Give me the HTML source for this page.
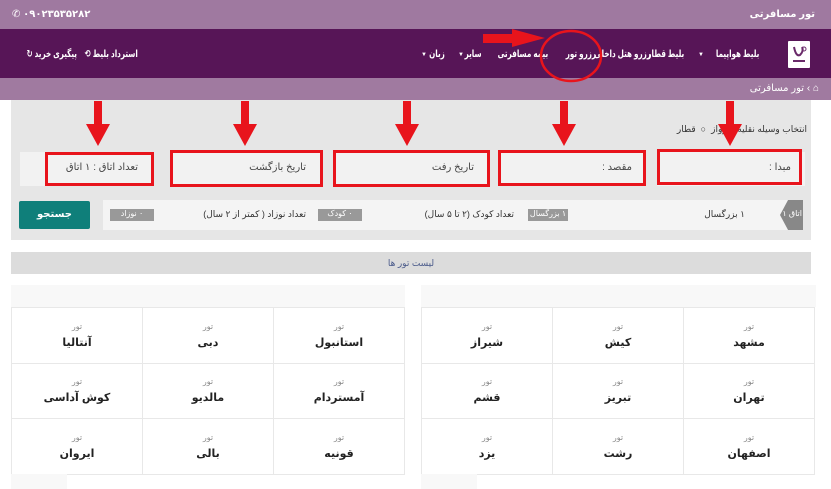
<!DOCTYPE html>
<html><head><meta charset="utf-8"><style>
*{margin:0;padding:0;box-sizing:border-box}
body{width:831px;height:489px;overflow:hidden;background:#fff;font-family:"Liberation Sans","DejaVu Sans",sans-serif;position:relative;font-size:10px;color:#333}
.a{position:absolute;white-space:nowrap}
.r{direction:rtl}
.top{left:0;top:0;width:831px;height:29px;background:#9f79a0;color:#fff;font-weight:bold}
.nav{left:0;top:29px;width:831px;height:49px;background:#571557;color:#fff;font-size:10px;overflow:hidden}
.nav span{top:20px}
.s{transform:scaleX(.72);transform-origin:right center;font-weight:bold}
.bc{left:0;top:78px;width:831px;height:22px;background:#a07aa0;color:#fff}
.srch{left:11px;top:100px;width:800px;height:140px;background:#e6e6e6}
.fld{background:#f2f2f2;height:34px;top:152px;font-size:10px;color:#444;direction:rtl;padding:10px 14px}
.rb{border:3px solid #e8141c}
.grid{border-collapse:collapse;position:absolute;top:307px}
.grid td{width:131px;height:55.5px;border:1px solid #e8e8e8;text-align:center;vertical-align:middle;direction:rtl}
.grid small{display:block;font-size:8px;color:#888;margin-bottom:5px}
.grid b{font-size:11px;color:#222}
</style></head><body>
<div class="a top"><span class="a r" style="right:16px;top:9px;font-size:10px">تور مسافرتی</span><span class="a" style="left:12px;top:9px;font-size:10px;direction:ltr">&#9990; ۰۹۰۲۳۵۳۵۲۸۲</span></div>
<div class="a nav">
 <div class="a" style="left:788px;top:12px;width:22px;height:27px;background:#fff;border-radius:1px"></div>
 <svg class="a" style="left:790px;top:14px" width="18" height="22"><path d="M4 4 Q6 14 10 12 Q14 8 12 4" fill="none" stroke="#6a2a6a" stroke-width="2"/><circle cx="14" cy="6" r="2" fill="none" stroke="#6a2a6a"/><rect x="3" y="17" width="12" height="2" fill="#6a2a6a"/></svg>
 <span class="a r s" style="right:72px">بلیط هواپیما</span>
 <span class="a" style="left:698px;font-size:6px;top:23px">▼</span>
 <span class="a r s" style="right:147px">بلیط قطار</span>
 <span class="a r s" style="right:180px">رزرو هتل داخلی</span>
 <span class="a r s" style="right:235px">رزرو تور</span>
 <span class="a r s" style="right:283px">بیمه مسافرتی</span>
 <span class="a r s" style="right:349px">سایر</span>
 <span class="a" style="left:458px;font-size:6px;top:23px">▼</span>
 <span class="a r s" style="right:386px">زبان</span>
 <span class="a" style="left:421px;font-size:6px;top:23px">▼</span>
 <span class="a r s" style="right:693px">استرداد بلیط ⟲</span>
 <span class="a r s" style="right:754px">پیگیری خرید ↻</span>
</div>
<div class="a bc"><span class="a r" style="right:12px;top:5px;font-size:10px">⌂ &#8250; تور مسافرتی</span></div>
<div class="a srch"></div>
<span class="a r" style="right:24px;top:124px;font-size:9px">انتخاب وسیله نقلیه &nbsp; پرواز &nbsp;○&nbsp; قطار</span>
<div class="a fld" style="left:20px;width:132px">تعداد اتاق : ۱ اتاق</div>
<div class="a fld" style="left:170px;width:150px">تاریخ بازگشت</div>
<div class="a fld" style="left:333px;width:155px">تاریخ رفت</div>
<div class="a fld" style="left:498px;width:148px">مقصد :</div>
<div class="a fld" style="left:657px;width:148px">مبدا :</div>
<div class="a rb" style="left:45px;top:152px;width:109px;height:34px"></div>
<div class="a rb" style="left:170px;top:150px;width:153px;height:37px"></div>
<div class="a rb" style="left:333px;top:150px;width:157px;height:37px"></div>
<div class="a rb" style="left:498px;top:150px;width:148px;height:36px"></div>
<div class="a rb" style="left:657px;top:149px;width:145px;height:36px"></div>
<div class="a" style="left:103px;top:200px;width:700px;height:30px;background:#f4f4f4"></div>
<div class="a" style="left:780px;top:200px;width:23px;height:30px;background:#888;clip-path:polygon(35% 0,100% 0,100% 100%,35% 100%,0 50%)"></div>
<span class="a r" style="right:29px;top:209px;color:#fff;font-size:8px">اتاق ۱</span>
<span class="a r" style="right:86px;top:209px;font-size:9px">۱ بزرگسال</span>
<span class="a r" style="left:528px;top:209px;width:40px;height:12px;background:#999;color:#fff;font-size:8px;text-align:center">۱ بزرگسال</span>
<span class="a r" style="right:317px;top:209px;font-size:9px">تعداد کودک (۲ تا ۵ سال)</span>
<span class="a r" style="left:318px;top:209px;width:44px;height:12px;background:#999;color:#fff;font-size:8px;text-align:center">۰ کودک</span>
<span class="a r" style="right:525px;top:209px;font-size:9px">تعداد نوزاد ( کمتر از ۲ سال)</span>
<span class="a r" style="left:110px;top:209px;width:44px;height:12px;background:#999;color:#fff;font-size:8px;text-align:center">۰ نوزاد</span>
<div class="a" style="left:19px;top:201px;width:71px;height:28px;background:#0f7f7a;color:#fff;font-weight:bold;text-align:center;line-height:28px;border-radius:2px">جستجو</div>
<div class="a" style="left:11px;top:252px;width:800px;height:22px;background:#dcdcdc;text-align:center;line-height:22px;color:#4a5a8a;font-size:9px">لیست تور ها</div>
<div class="a" style="left:11px;top:285px;width:394px;height:22px;background:#f8f8f8"></div>
<div class="a" style="left:421px;top:285px;width:395px;height:22px;background:#f8f8f8"></div>
<table class="grid" style="left:11px"><tr><td><small>تور</small><b>آنتالیا</b></td><td><small>تور</small><b>دبی</b></td><td><small>تور</small><b>استانبول</b></td></tr>
<tr><td><small>تور</small><b>کوش آداسی</b></td><td><small>تور</small><b>مالدیو</b></td><td><small>تور</small><b>آمستردام</b></td></tr>
<tr><td><small>تور</small><b>ایروان</b></td><td><small>تور</small><b>بالی</b></td><td><small>تور</small><b>قونیه</b></td></tr></table>
<table class="grid" style="left:421px"><tr><td><small>تور</small><b>شیراز</b></td><td><small>تور</small><b>کیش</b></td><td><small>تور</small><b>مشهد</b></td></tr>
<tr><td><small>تور</small><b>قشم</b></td><td><small>تور</small><b>تبریز</b></td><td><small>تور</small><b>تهران</b></td></tr>
<tr><td><small>تور</small><b>یزد</b></td><td><small>تور</small><b>رشت</b></td><td><small>تور</small><b>اصفهان</b></td></tr></table>
<div class="a" style="left:11px;top:474px;width:56px;height:15px;background:#f8f8f8"></div>
<div class="a" style="left:421px;top:474px;width:56px;height:15px;background:#f8f8f8"></div>
<svg class="a" style="left:0;top:0" width="831" height="489">
<g fill="#e8141c">
<polygon points="94,101 102,101 102,124 110,124 98,146 86,124 94,124"/>
<polygon points="241,101 249,101 249,124 257,124 245,146 233,124 241,124"/>
<polygon points="403,101 411,101 411,124 419,124 407,146 395,124 403,124"/>
<polygon points="560,101 568,101 568,124 576,124 564,146 552,124 560,124"/>
<polygon points="726,101 734,101 734,124 742,124 730,146 718,124 726,124"/>
<polygon points="483,34 512,34 512,29 545,38 512,47 512,43 483,43"/>
</g>
<ellipse cx="571" cy="56" rx="30" ry="25" fill="none" stroke="#e8141c" stroke-width="2.5"/>
</svg>
</body></html>
